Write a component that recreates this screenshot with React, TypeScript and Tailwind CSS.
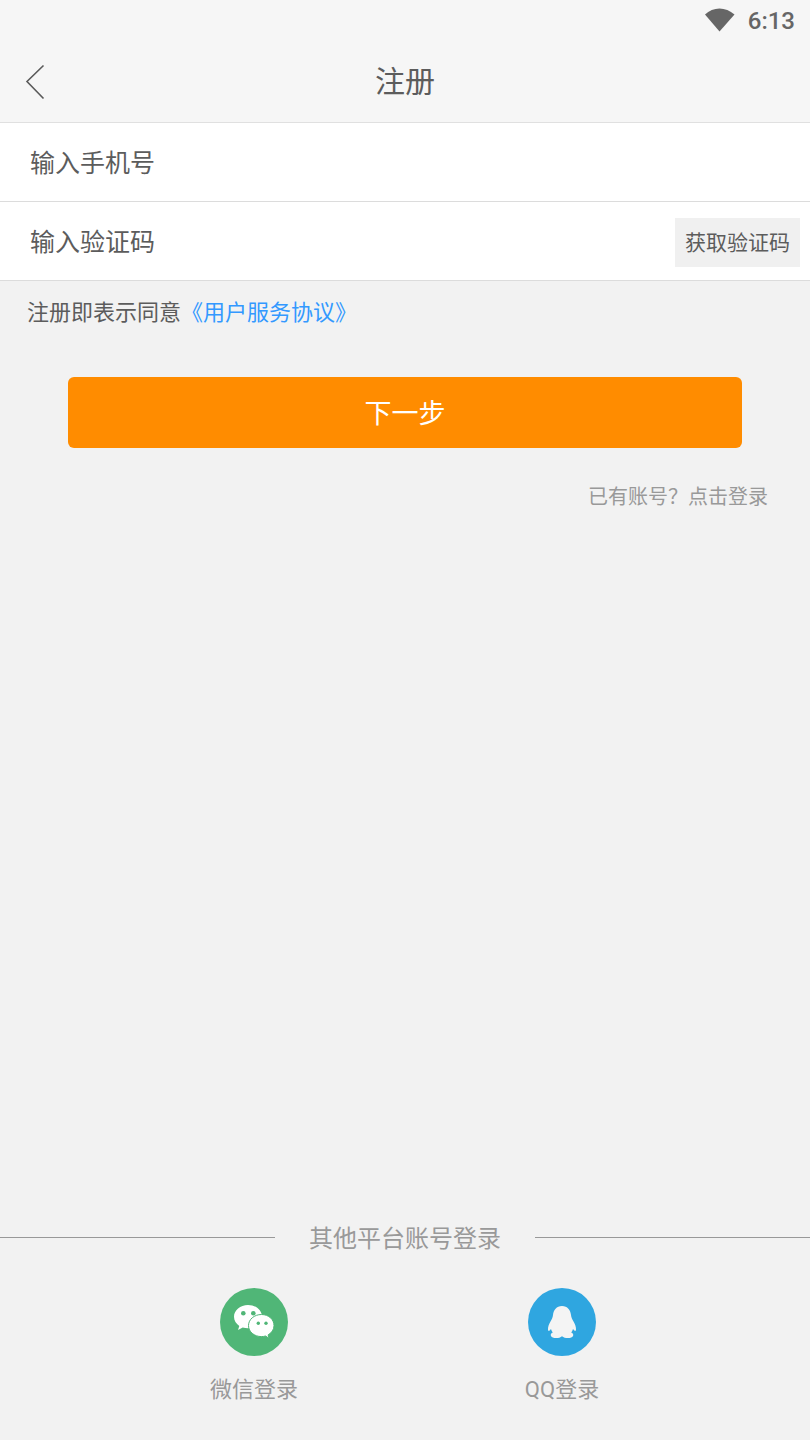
const cjk = "font-['Roboto','Noto_Sans_CJK_SC',sans-serif]";

function Wifi() {
  return (
    <svg width="32" height="26" viewBox="0 0 32 26" className="block -mt-[2px]">
      <path d="M1 7.500C5 3.600 10.200 1.500 15.500 1.500S26 3.600 30.500 7.500L15.500 24.500Z" fill="#666666" />
    </svg>
  );
}

function Back() {
  return (
    <svg width="22" height="36" viewBox="0 0 22 36" className="block" fill="none">
      <path d="M19.500 1.500 3 17.500 19.500 34.500" stroke="#5a5a5a" strokeWidth="1.600" />
    </svg>
  );
}

function WeChat() {
  return (
    <svg width="68" height="68" viewBox="0 0 68 68" className="block">
      <circle cx="34" cy="34" r="34" fill="#50b677" />
      <path d="M28 17C20.300 17 14 22.200 14 28.700c0 3.700 2.100 7 5.300 9.200l-1.300 4 4.700-2.400c1.700.5 3.500.7 5.300.7 7.700 0 14-5.200 14-11.600C42 22.200 35.700 17 28 17Z" fill="#ffffff" />
      <path d="M41.500 26.500C34.300 26.500 28.500 31.400 28.500 37.600s5.800 11 13 11c1.400 0 2.800-.2 4-.6l3.600 2.300-1-3.400c3.600-2 5.900-5.400 5.900-9.300C54 31.400 48.700 26.500 41.500 26.500Z" fill="#ffffff" stroke="#50b677" strokeWidth="1" />
      <circle cx="23.300" cy="25.300" r="2.300" fill="#50b677" />
      <circle cx="33.300" cy="25.300" r="2.300" fill="#50b677" />
      <circle cx="38.300" cy="35.300" r="1.700" fill="#50b677" />
      <circle cx="46" cy="35.300" r="1.700" fill="#50b677" />
    </svg>
  );
}

function QQ() {
  return (
    <svg width="68" height="68" viewBox="0 0 68 68" className="block">
      <circle cx="34" cy="34" r="34" fill="#2fa6e0" />
      <path d="M34 18C28.500 18 25.500 22 25 27C24.800 29.500 23.600 31.500 22.500 33.500C21 36 19.800 39 20 42C20.200 43.500 21.500 43 23 41C23.400 42.500 24 43.500 24.800 44.500C23.300 45 22.500 46 22.800 47.500C23.200 49.500 26 50 28 50C30.500 50 32.500 49.500 34 48.200C35.500 49.500 37.500 50 40 50C42 50 44.800 49.500 45.200 47.500C45.500 46 44.700 45 43.200 44.500C44 43.500 44.600 42.500 45 41C46.500 43 47.800 43.500 48 42C48.200 39 47 36 45.500 33.500C44.400 31.500 43.200 29.500 43 27C42.500 22 39.500 18 34 18Z" fill="#f4f4f4" />
    </svg>
  );
}

export default function App() {
  return (
    <div className={`h-[1440px] w-[810px] flex flex-col bg-[#f2f2f2] overflow-hidden ${cjk}`}>
      <header className="h-[123px] bg-[#f6f6f6] border-b border-[#e0e0e0] flex flex-col shrink-0">
        <div className="h-[42px] flex items-center justify-end pr-[15px] gap-[12px]">
          <Wifi />
          <span className="text-[24px] font-medium text-[#666666] leading-none font-['Roboto',sans-serif]">6:13</span>
        </div>
        <div className="relative flex-1 flex items-center justify-center">
          <div className="absolute left-[24px] top-[22px]"><Back /></div>
          <span className="text-[30px] leading-none text-[#5c5c5c] -mt-[1px]">注册</span>
        </div>
      </header>

      <div className="h-[79px] bg-white border-b border-[#dcdcdc] flex items-center pl-[30px] pt-[3px] text-[25px] text-[#5c5c5c] shrink-0">
        输入手机号
      </div>
      <div className="h-[79px] bg-white border-b border-[#dcdcdc] flex items-center justify-between pl-[30px] pr-[10px] shrink-0">
        <span className="text-[25px] text-[#5c5c5c] pt-[3px]">输入验证码</span>
        <span className="w-[125px] h-[49px] mt-[3px] pt-[3px] bg-[#f0f0f0] flex items-center justify-center text-[21px] text-[#5c5c5c]">获取验证码</span>
      </div>

      <p className="pl-[27px] pt-[16px] text-[22px] leading-[32px] text-[#5c5c5c] whitespace-nowrap">
        注册即表示同意<span className="text-[#3399ff]">《用户服务协议》</span>
      </p>

      <button className="mx-[68px] mt-[48px] h-[71px] pt-[3px] rounded-[6px] bg-[#ff8c00] text-white text-[27px] shrink-0">
        下一步
      </button>

      <p className="mt-[35px] pr-[42px] text-right text-[20px] leading-[28px] text-[#999999]">已有账号？点击登录</p>

      <div className="mt-auto relative h-[32px] flex items-center justify-center">
        <div className="absolute left-0 top-[15px] w-[275px] h-px bg-[#999999]" />
        <span className="text-[24px] leading-none text-[#999999] pt-[2px]">其他平台账号登录</span>
        <div className="absolute right-0 top-[15px] w-[275px] h-px bg-[#999999]" />
      </div>

      <div className="grid grid-cols-2 pl-[100px] pr-[94px] mt-[34px] pb-[34px]">
        <div className="flex flex-col items-center gap-[18px]">
          <WeChat />
          <span className="text-[22px] leading-[32px] text-[#999999]">微信登录</span>
        </div>
        <div className="flex flex-col items-center gap-[18px]">
          <QQ />
          <span className="text-[22px] leading-[32px] text-[#999999]">QQ登录</span>
        </div>
      </div>
    </div>
  );
}
